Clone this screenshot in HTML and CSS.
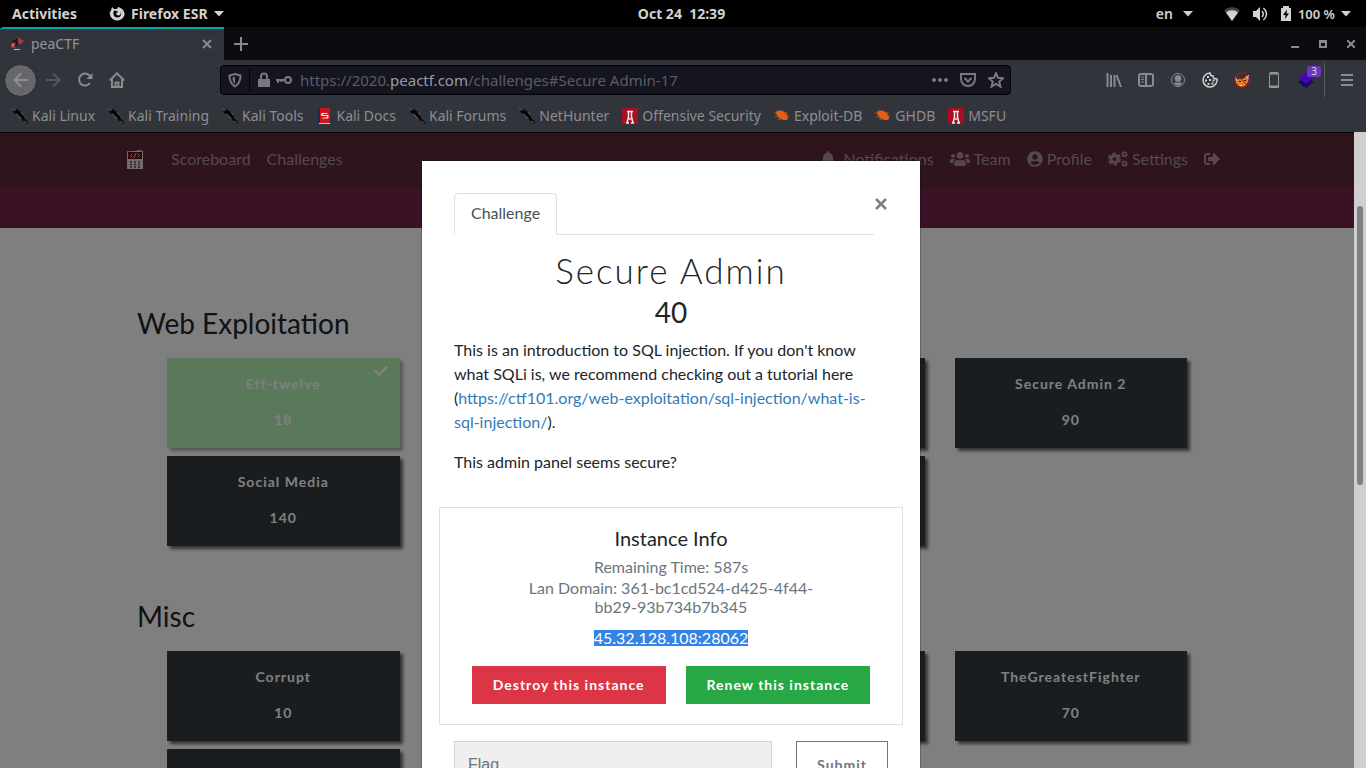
FILE: index.html
```html
<!DOCTYPE html>
<html lang="en">
<head>
<meta charset="utf-8">
<title>peaCTF</title>
<link rel="stylesheet" href="styles.css">
</head>
<body>
<svg class="defs" aria-hidden="true">
  <symbol id="dragon" viewBox="0 0 16 16"><path fill="#050506" d="M0 0l3 1.500 2-.500 2 2 2.500 1 1.500 3 1 3 4 4-.500 2-2-1-3-3-1-2-3-1.500L5 7 3 5.500 1 4l1-1z"/><path stroke="#85878b" stroke-width=".7" fill="none" d="M0 .500l4 2M4 6l2 1 1 2 2 1M9 4l2 3M12 13l3 2"/></symbol>
  <symbol id="docs" viewBox="0 0 16 16"><path fill="#1b2b58" d="M2 1h2v14H2z"/><path fill="#d0121b" d="M4 0h10v15H4z"/><path fill="#ccc" d="M3 15h11v1H3z"/><path d="M11.500 5.500H7L6 7.500h6L11 10H6.500M7.500 5L5 6.500M10.500 10.500l2-1.500" stroke="#ddd" stroke-width="1.200" fill="none"/></symbol>
  <symbol id="offsec" viewBox="0 0 16 16"><path fill="#a90e22" d="M0 0h16v16H0z"/><path d="M5 3.500h6M6.500 3v6L5 15m4.500-12v6L11 15M4 15h3M9 15h3M7 11h2" fill="none" stroke="#eee" stroke-width="1.500"/></symbol>
  <symbol id="bug" viewBox="0 0 16 16"><path fill="#e25f13" d="M2 4c2-2 6-2 8 0 3 1 4 4 4 7-2 2-5 1-7 0C4 10 2 7 2 4z"/><path stroke="#b5541b" stroke-width=".8" fill="none" d="M0 5h3M1 9h5m-2 3l3-1M10 5l4-1M12 8l3 0M5 4L3 2"/></symbol>
  <symbol id="caret" viewBox="0 0 10 6"><path fill="currentColor" d="M0 0h10L5 5.500z"/></symbol>
</svg>

<div class="desktop">
  <header class="topbar">
    <div class="top-left">
      <button class="top-btn">Activities</button>
      <button class="top-btn app">
        <svg width="16" height="16" viewBox="0 0 16 16"><path fill="currentColor" d="M3 1l2 2h3l1-2c4 1 7 4 6.500 8A7.500 7.500 0 1 1 1 5l.500 1z"/><path fill="#000" d="M5 4.500l3 .500 1 1.500-2 .500c0 2 2 3 4 2 1-1 1-2.500.500-4C13 8 12 11 9 11.500 5 12 3.500 8 5 4.500z"/></svg>
        Firefox ESR
        <svg width="10" height="6"><use href="#caret"/></svg>
      </button>
    </div>
    <button class="top-btn clock">Oct 24&nbsp; 12:39</button>
    <div class="top-right">
      <button class="top-btn lang">en <svg width="10" height="6"><use href="#caret"/></svg></button>
      <button class="top-btn status">
        <svg width="16" height="16" viewBox="0 0 16 16"><path fill="#444" d="M0 4.500C4 0 12 0 16 4.500L8 15z"/><path fill="currentColor" d="M2 6.500c3-3 9-3 12 0L8 15z"/></svg>
        <svg class="sound" width="16" height="16" viewBox="0 0 16 16"><path fill="currentColor" d="M1 5h3l4-4v14l-4-4H1z"/><path stroke="currentColor" stroke-width="1.500" fill="none" d="M10 5q2.500 3 0 6M11.500 2q6 6 0 12"/></svg>
        <svg class="battery" width="12" height="16" viewBox="0 0 12 16"><path fill="currentColor" d="M1 2h2V0h6v2h2v13H1z"/><path d="M7 3.500L3 9h2.500L5 13l4-5.500H6.500z"/></svg>
        100 %
        <svg width="10" height="6"><use href="#caret"/></svg>
      </button>
    </div>
  </header>

  <div class="tabstrip">
    <div class="tab">
      <svg width="16" height="16" viewBox="0 0 16 16"><path fill="#b53540" d="M7 1l7 4-5 4z"/><circle cx="3.500" cy="9.500" r="2.500" fill="#b53540"/><circle cx="3" cy="9" r="1" fill="#d99"/><path stroke="#15161a" stroke-width="1.500" fill="none" d="M7 2v6l-2 2M3 5h3"/><path stroke="#bbb" d="M4 13.500h6"/></svg>
      <span class="tab-title">peaCTF</span>
      <button class="icon-btn" aria-label="Close tab"><svg width="12" height="12" viewBox="0 0 12 12"><path class="line" d="M2 2l8 8M10 2l-8 8"/></svg></button>
    </div>
    <button class="icon-btn new-tab" aria-label="New tab"><svg width="16" height="16" viewBox="0 0 16 16"><path class="line" d="M8 1v14M1 8h14"/></svg></button>
    <div class="win-btns">
      <button class="icon-btn" aria-label="Minimize"><svg width="8" height="8" viewBox="0 0 8 8"><path fill="currentColor" d="M0 6h8v2H0z"/></svg></button>
      <button class="icon-btn" aria-label="Maximize"><svg width="8" height="8" viewBox="0 0 8 8"><path stroke="currentColor" stroke-width="2" fill="none" d="M1 2h6v5H1zM0 1h8"/></svg></button>
      <button class="icon-btn" aria-label="Close"><svg width="8" height="8" viewBox="0 0 8 8"><path stroke="currentColor" stroke-width="2" d="M0 0l8 8M8 0L0 8"/></svg></button>
    </div>
  </div>

  <div class="toolbar">
    <div class="nav-btns">
      <button class="back" aria-label="Back"><svg width="16" height="16" viewBox="0 0 16 16"><path class="line" d="M15 8H2M8 1.500L1.500 8 8 14.500"/></svg></button>
      <button class="icon-btn dim" aria-label="Forward"><svg width="16" height="16" viewBox="0 0 16 16"><path class="line" d="M1 8h13M8 1.500L14.500 8 8 14.500"/></svg></button>
      <button class="icon-btn" aria-label="Reload"><svg width="16" height="16" viewBox="0 0 16 16"><path class="line" d="M13 11a6 6 0 1 1-.500-7.500L14 5"/><path fill="currentColor" d="M15.500 1v6h-6z"/></svg></button>
      <button class="icon-btn" aria-label="Home"><svg width="16" height="16" viewBox="0 0 16 16"><path class="line" d="M.800 8.500L8 1.300l7.200 7.200M3 7v8h10V7M6.500 15v-4.500h3V15"/></svg></button>
    </div>
    <div class="urlbar">
      <svg width="14" height="16" viewBox="0 0 14 16"><path class="line" d="M7 2l5.500 1.500C12.500 9 11 12 7 14.500 3 12 1.500 9 1.500 3.500z"/><path fill="currentColor" d="M7 5v7C5 10.500 4.500 8 4.500 5.500z"/></svg>
      <span class="url-sep"></span>
      <svg width="12" height="16" viewBox="0 0 12 16"><path fill="currentColor" d="M0 7h12v8H0z"/><path stroke="currentColor" stroke-width="2" fill="none" d="M3 8V4.500a3 3 0 0 1 6 0V8"/></svg>
      <svg class="key" width="16" height="8" viewBox="0 0 16 8"><circle class="line" cx="12" cy="4" r="3"/><path class="line" d="M9 4H0M2 4v3M5.500 4v2"/></svg>
      <span class="url">https://2020.<b>peactf.com</b>/challenges#Secure Admin-17</span>
      <svg width="16" height="16" viewBox="0 0 16 16"><g fill="currentColor"><circle cx="2" cy="8" r="2"/><circle cx="8" cy="8" r="2"/><circle cx="14" cy="8" r="2"/></g></svg>
      <svg width="16" height="16" viewBox="0 0 16 16"><path class="line" d="M1 2h14v5a7 7 0 0 1-14 0zM4.500 6L8 9.500 11.500 6"/></svg>
      <svg width="16" height="16" viewBox="0 0 16 16"><path class="line" d="M8 1l2 4.800 5.200.400-4 3.300 1.300 5.200L8 12l-4.500 2.700L4.800 9.500l-4-3.300L6 5.800z"/></svg>
    </div>
    <div class="ext-btns">
      <button class="icon-btn" aria-label="Library"><svg width="16" height="16" viewBox="0 0 16 16"><path class="line" d="M1.500 1v14M5 3v12M8.500 3v12M10.500 3l4.500 12"/></svg></button>
      <button class="icon-btn" aria-label="Sidebars"><svg width="16" height="16" viewBox="0 0 16 16"><rect class="line" x="1" y="2" width="14" height="12" rx="2"/><path class="line" d="M8 2v12"/><path stroke="currentColor" d="M3 5h3M3 7.500h3M3 10h3"/></svg></button>
      <button class="icon-btn" aria-label="Account"><svg width="16" height="16" viewBox="0 0 16 16"><circle cx="8" cy="8" r="6.500" fill="none" stroke="currentColor"/><circle cx="8" cy="6.500" r="3.300" fill="currentColor"/><path fill="currentColor" d="M3.500 10.500h9l-2.500 3H6z"/></svg></button>
      <button class="icon-btn bright" aria-label="Cookies"><svg width="16" height="16" viewBox="0 0 16 16"><path fill="none" stroke="currentColor" stroke-width="1.500" d="M8 1c0 2 1 3 3 3 0 2 2 3 4 3a7 7 0 1 1-7-6z"/><path fill="currentColor" d="M5 4h2v2H5zM3 7.500h2v2H3zM7 7h2v2H7zM10.500 7.500h2v2h-2zM5.500 11h2v2h-2zM9.500 10.500h2v2h-2z"/></svg></button>
      <button class="icon-btn" aria-label="Proxy"><svg width="16" height="16" viewBox="0 0 16 16"><path fill="#d98220" d="M2 8l3-1 4 0 5-4v7l-4 5-5-1-3-3z"/><path fill="#ddd" d="M1 4l2 3-1 3zM12 4l3-1v5zM5 13l3 0-1 2z"/><path fill="#222" d="M5 9h2v1H5zM10 8h2v1h-2z"/><circle cx="8" cy="8" r="7.200" fill="none" stroke="#c40f12"/><path stroke="#c40f12" d="M3 3l10 10"/></svg></button>
      <button class="icon-btn" aria-label="Responsive mode"><svg width="16" height="16" viewBox="0 0 16 16"><rect x="3.500" y=".5" width="9" height="15" rx="1" fill="none" stroke="#99958f"/><path stroke="#99958f" stroke-width="2" d="M3 14.500h10M4 1.500h8"/></svg></button>
      <button class="icon-btn ext" aria-label="Wappalyzer"><svg width="16" height="16" viewBox="0 0 16 16"><path fill="#1c0568" d="M0 10l8-5 8 5-8 6z"/><path fill="#4608ad" d="M0 6l8-6 8 6-8 5.500z"/></svg><span class="count">3</span></button>
      <span class="ext-sep"></span>
      <button class="icon-btn" aria-label="Menu"><svg width="12" height="16" viewBox="0 0 12 16"><path class="line" d="M0 3h12M0 8h12M0 13h12"/></svg></button>
    </div>
  </div>

  <nav class="bookmarks" aria-label="Bookmarks">
    <a href="#"><svg width="16" height="16"><use href="#dragon"/></svg>Kali Linux</a>
    <a href="#"><svg width="16" height="16"><use href="#dragon"/></svg>Kali Training</a>
    <a href="#"><svg width="16" height="16"><use href="#dragon"/></svg>Kali Tools</a>
    <a href="#"><svg width="16" height="16"><use href="#docs"/></svg>Kali Docs</a>
    <a href="#"><svg width="16" height="16"><use href="#dragon"/></svg>Kali Forums</a>
    <a href="#"><svg width="16" height="16"><use href="#dragon"/></svg>NetHunter</a>
    <a href="#"><svg width="16" height="16"><use href="#offsec"/></svg>Offensive Security</a>
    <a href="#"><svg width="16" height="16"><use href="#bug"/></svg>Exploit-DB</a>
    <a href="#"><svg width="16" height="16"><use href="#bug"/></svg>GHDB</a>
    <a href="#"><svg width="16" height="16"><use href="#offsec"/></svg>MSFU</a>
  </nav>

  <div class="viewport">
    <div class="page">
      <nav class="navbar">
        <div class="navbar-inner">
          <a class="brand" href="#" aria-label="peaCTF"><svg width="16" height="20" viewBox="0 0 16 20"><path fill="#e0d8d6" d="M0 1l2 .5L4 1h4l4-1 4 1v18H0z"/><path fill="#5d0910" d="M1 2h14v7H1z"/><path stroke="#d5c8c8" fill="none" d="M5.500 3.500l-2 2 2 2M10.500 3.500l2 2-2 2M9 3l-2 5"/><path stroke="#7b3a40" stroke-width="1.500" stroke-dasharray="2 2" d="M3 12h11M3 14.500h11M3 17h11"/></svg></a>
          <a href="#">Scoreboard</a>
          <a href="#">Challenges</a>
          <div class="nav-right">
            <a class="bell" href="#"><svg width="14" height="16" viewBox="0 0 448 512"><path fill="currentColor" d="M224 512c35.320 0 63.970-28.650 63.970-64H160.030c0 35.350 28.650 64 63.970 64zm215.390-149.710c-19.320-20.760-55.470-51.990-55.470-154.290 0-77.700-54.480-139.900-127.940-155.160V32c0-17.670-14.320-32-31.980-32s-31.980 14.330-31.980 32v20.840C118.560 68.100 64.080 130.300 64.080 208c0 102.300-36.150 133.530-55.470 154.290-6 6.450-8.660 14.160-8.610 21.710.110 16.400 12.980 32 32.100 32h383.800c19.120 0 32-15.600 32.100-32 .050-7.550-2.610-15.270-8.610-21.710z"/></svg>Notifications</a>
            <a href="#"><svg width="20" height="16" viewBox="0 0 640 512"><path fill="currentColor" d="M96 224c35.300 0 64-28.700 64-64s-28.700-64-64-64-64 28.700-64 64 28.700 64 64 64zm448 0c35.300 0 64-28.700 64-64s-28.700-64-64-64-64 28.700-64 64 28.700 64 64 64zm32 32h-64c-17.600 0-33.500 7.100-45.100 18.600 40.300 22.100 68.900 62 75.100 109.400h66c17.700 0 32-14.300 32-32v-32c0-35.300-28.700-64-64-64zm-256 0c61.900 0 112-50.100 112-112S381.900 32 320 32 208 82.100 208 144s50.100 112 112 112zm76.800 32h-8.300c-20.800 10-43.900 16-68.500 16s-47.600-6-68.500-16h-8.300C179.600 288 128 339.600 128 403.200V432c0 26.500 21.500 48 48 48h288c26.500 0 48-21.500 48-48v-28.800c0-63.600-51.600-115.200-115.200-115.200zm-223.700-13.400C161.500 263.100 145.600 256 128 256H64c-35.300 0-64 28.700-64 64v32c0 17.700 14.300 32 32 32h65.900c6.300-47.400 34.900-87.300 75.200-109.400z"/></svg>Team</a>
            <a href="#"><svg width="16" height="16" viewBox="0 0 496 512"><path fill="currentColor" d="M248 8C111 8 0 119 0 256s111 248 248 248 248-111 248-248S385 8 248 8zm0 96c48.600 0 88 39.400 88 88s-39.400 88-88 88-88-39.400-88-88 39.400-88 88-88zm0 344c-58.700 0-111.300-26.600-146.500-68.200 18.800-35.400 55.600-59.800 98.500-59.800 2.400 0 4.800.4 7.100 1.100 13 4.200 26.600 6.900 40.900 6.900 14.300 0 28-2.700 40.900-6.900 2.300-.7 4.700-1.100 7.100-1.100 42.900 0 79.700 24.400 98.500 59.800C359.300 421.400 306.700 448 248 448z"/></svg>Profile</a>
            <a href="#"><svg width="20" height="16" viewBox="0 0 20 16"><g fill="none" stroke="currentColor"><circle cx="6.500" cy="8" r="3.500" stroke-width="3"/><circle cx="6.500" cy="8" r="5.700" stroke-width="1.800" stroke-dasharray="3.600 2.370"/><circle cx="16.500" cy="3.300" r="1.900" stroke-width="1.500"/><circle cx="16.500" cy="3.300" r="2.900" stroke-width="1" stroke-dasharray="1.500 1.500"/><circle cx="16.500" cy="12.700" r="1.900" stroke-width="1.500"/><circle cx="16.500" cy="12.700" r="2.900" stroke-width="1" stroke-dasharray="1.500 1.500"/></g></svg>Settings</a>
            <a href="#" aria-label="Logout"><svg width="16" height="16" viewBox="0 0 512 512"><path fill="currentColor" d="M497 273L329 441c-15 15-41 4.500-41-17v-96H152c-13.300 0-24-10.700-24-24v-96c0-13.300 10.700-24 24-24h136V88c0-21.400 25.900-32 41-17l168 168c9.300 9.400 9.300 24.600 0 34zM192 436v-40c0-6.600-5.400-12-12-12H96c-17.700 0-32-14.300-32-32V160c0-17.700 14.300-32 32-32h84c6.600 0 12-5.400 12-12V76c0-6.600-5.400-12-12-12H96c-53 0-96 43-96 96v192c0 53 43 96 96 96h84c6.600 0 12-5.400 12-12z"/></svg></a>
          </div>
        </div>
      </nav>
      <div class="jumbotron"></div>
      <main class="board">
        <section>
          <h3>Web Exploitation</h3>
          <div class="tiles">
            <button class="tile solved"><span>Eff-twelve</span><span>18</span><svg class="check" width="14" height="14" viewBox="0 0 512 512"><path fill="currentColor" d="M173.898 439.404l-166.400-166.400c-9.997-9.997-9.997-26.206 0-36.204l36.203-36.204c9.997-9.998 26.207-9.998 36.204 0L192 312.690 432.095 72.596c9.997-9.997 26.207-9.997 36.204 0l36.203 36.204c9.997 9.997 9.997 26.206 0 36.204l-294.400 294.401c-9.998 9.997-26.207 9.997-36.204-.001z"/></svg></button>
            <button class="tile"></button>
            <button class="tile"></button>
            <button class="tile"><span>Secure Admin 2</span><span>90</span></button>
            <button class="tile"><span>Social Media</span><span>140</span></button>
            <button class="tile"></button>
            <button class="tile"></button>
          </div>
        </section>
        <section>
          <h3>Misc</h3>
          <div class="tiles">
            <button class="tile"><span>Corrupt</span><span>10</span></button>
            <button class="tile"></button>
            <button class="tile"></button>
            <button class="tile"><span>TheGreatestFighter</span><span>70</span></button>
            <button class="tile"></button>
          </div>
        </section>
      </main>
    </div>

    <div class="backdrop">
      <div class="modal" role="dialog" aria-labelledby="challenge-name">
        <div class="modal-head">
          <div class="tabs"><button class="tab-link">Challenge</button></div>
          <button class="close" aria-label="Close"><svg width="14" height="12" viewBox="0 0 14 12"><path stroke="currentColor" stroke-width="2.600" d="M2 1l10 10M12 1L2 11"/></svg></button>
        </div>
        <h2 id="challenge-name">Secure Admin</h2>
        <h3 class="points">40</h3>
        <p>This is an introduction to SQL injection. If you don't know what SQLi is, we recommend checking out a tutorial here (<a href="#">https://ctf101.org/web-exploitation/sql-injection/what-is-sql-injection/</a>).</p>
        <p>This admin panel seems secure?</p>
        <div class="instance">
          <h5>Instance Info</h5>
          <div class="muted">Remaining Time: 587s</div>
          <div class="muted">Lan Domain: 361-bc1cd524-d425-4f44-bb29-93b734b7b345</div>
          <div class="address"><mark>45.32.128.108:28062</mark></div>
          <div class="actions">
            <button class="btn danger">Destroy this instance</button>
            <button class="btn success">Renew this instance</button>
          </div>
        </div>
        <form class="submit-row">
          <input type="text" placeholder="Flag" aria-label="Flag">
          <button type="button" class="btn outline">Submit</button>
        </form>
      </div>
    </div>
    <div class="scrollbar"><div class="thumb"></div></div>
  </div>
</div>
</body>
</html>
```

FILE: styles.css
```css
* { box-sizing: border-box; }
body { margin: 0; font-family: Lato, sans-serif; font-size: 16px; line-height: 24px; color: #212529; }
button, input { font: inherit; margin: 0; border-radius: 0; }
button { border: 0; padding: 0; background: none; color: inherit; }
svg { display: block; flex: none; }
a { text-decoration: none; color: inherit; }
h2, h3, h5, p { margin: 0; font-weight: 400; }
.defs { position: absolute; width: 0; height: 0; }
.line { fill: none; stroke: currentColor; stroke-width: 2; }

.desktop { display: flex; flex-direction: column; height: 100vh; overflow: hidden; }

/* desktop top bar */
.topbar { display: grid; grid-template-columns: 1fr auto 1fr; align-items: center; height: 27px; padding: 0 15px 0 12px; background: #000; color: #d2d2d0; font: 700 14px/20px "Noto Sans", sans-serif; }
.top-left, .top-right, .top-btn { display: flex; align-items: center; }
.top-left { gap: 32px; }
.top-btn { gap: 6px; }
.top-right { justify-content: flex-end; gap: 31px; font-weight: 600; }
.lang { gap: 10px; }
.status { font-size: 13px; }
.sound { margin-left: 6px; }
.battery { margin-left: 6px; }

/* browser chrome */
.tabstrip { display: flex; align-items: center; height: 33px; background: #0b0b10; color: #8f9496; font: 15px/20px "Noto Sans", sans-serif; }
.tab { display: flex; align-items: center; gap: 5px; width: 224px; height: 33px; padding: 0 11px 2px 10px; border-top: 2px solid #00a5a4; border-top-left-radius: 4px; background: #32343c; }
.tab-title { flex: 1; font-size: 14px; }
.new-tab { margin-left: 9px; }
.win-btns { display: flex; gap: 20px; margin-left: auto; padding-right: 11px; }
.icon-btn { display: flex; align-items: center; justify-content: center; color: #888a8d; }
.icon-btn.dim { color: #55575d; }
.icon-btn.bright { color: #cfd0d1; }

.toolbar { display: flex; align-items: center; height: 41px; padding: 0 13px 1px 4px; background: #32343c; }
.nav-btns { display: flex; align-items: center; gap: 16px; }
.back { display: flex; align-items: center; justify-content: center; width: 33px; height: 33px; border: 1px solid #26272c; border-radius: 50%; background: #66676c; color: #8d8e91; margin-right: -8px; }
.urlbar { display: flex; align-items: center; flex: 1; height: 30px; margin: 0 95px; padding: 0 6px 0 7px; border: 1px solid #020204; border-radius: 4px; background: #141520; color: #77797d; gap: 12px; }
.url-sep { width: 1px; height: 22px; margin-left: -5px; margin-right: -4px; background: #020204; }
.key { margin-left: -6px; margin-right: -4px; }
.url { flex: 1; color: #5c5d64; font: 15px/20px "Noto Sans", sans-serif; white-space: nowrap; }
.url b { font-weight: 400; color: #9a9b9f; }
.ext-btns { display: flex; align-items: center; gap: 16px; }
.ext { position: relative; }
.count { position: absolute; left: 9px; top: -6px; width: 14px; height: 11px; border-radius: 2px; background: #6a38b8; color: #ddd; font: 10px/11px "Noto Sans", sans-serif; }
.ext-sep { width: 1px; height: 34px; margin-left: -6px; background: #5a5c62; }

.bookmarks { display: flex; align-items: center; gap: 13px; height: 31px; padding: 0 12px; border-bottom: 1px solid #2b363b; background: #32343c; color: #8d8e91; font: 14px/20px "Noto Sans", sans-serif; white-space: nowrap; }
.bookmarks a { display: flex; align-items: center; gap: 4px; }

/* site */
.viewport { position: relative; flex: 1; min-height: 0; display: flex; overflow: hidden; }
.page { flex: 1; background: #fff; }
.scrollbar { position: relative; width: 12px; background: #cfcfcf; padding: 74px 3px 0; }
.thumb { height: 279px; border-radius: 3px; background: #7d8182; }
.navbar { height: 56px; background: #5a283a; border-top: 1px solid #000; color: #aa939a; }
.navbar-inner { display: flex; align-items: center; height: 52px; max-width: 1110px; margin: 0 auto; padding: 0 12px 0 5px; gap: 16px; }
.brand { margin-right: 12px; padding-top: 2px; }
.nav-right { display: flex; gap: 16px; margin-left: auto; }
.nav-right a { display: flex; align-items: center; gap: 4px; }
.nav-right .bell { gap: 8px; }
.jumbotron { height: 40px; background: #76224c; }
.board { max-width: 1140px; margin: 0 auto; padding: 78px 30px 0; }
.board section { margin-bottom: 45px; }
h3 { font-size: 28px; line-height: 34px; }
.tiles { display: grid; grid-template-columns: repeat(4, 1fr); column-gap: 30px; row-gap: 8px; padding: 18px 30px 8px; }
.tile { position: relative; display: flex; flex-direction: column; align-items: center; gap: 16px; height: 90px; padding: 16px 16px 18px; background: #343a40; color: #fff; box-shadow: 3px 3px 3px rgba(0, 0, 0, 0.6); font-size: 14px; font-weight: 700; line-height: 20px; letter-spacing: 1px; }
.solved { background: #b4f2b6; box-shadow: 3px 3px 3px rgba(0, 0, 0, 0.3); }
.check { position: absolute; right: 12px; top: 6px; }

.backdrop { position: absolute; inset: 0 12px 0 0; display: flex; justify-content: center; align-items: flex-start; padding: 28px 12px 0 0; background: rgba(0, 0, 0, 0.5); }
.modal { width: 500px; padding: 32px; border: 1px solid rgba(0, 0, 0, 0.2); background: #fff; background-clip: padding-box; }
.modal-head { display: flex; align-items: flex-start; justify-content: space-between; margin-bottom: 16px; }
.tabs { width: 420px; display: flex; border-bottom: 1px solid #dee2e6; }
.tab-link { height: 42px; padding: 0 16px 2px; margin-bottom: -1px; border: 1px solid #dee2e6; border-bottom-color: #fff; border-radius: 4px 4px 0 0; background: #fff; color: #495057; }
.close { margin-top: 5px; color: #808080; }
h2 { font-size: 35px; line-height: 38px; font-weight: 300; letter-spacing: 2px; text-align: center; }
.points { margin: 6px 0 9px; text-align: center; }
.modal p { margin-bottom: 16px; }
.modal p a { color: #337ab7; }
.instance { margin: 33px -15px 16px; padding: 18px 20px 20px; border: 1px solid #dfdfdf; text-align: center; }
h5 { margin-bottom: 7px; font-size: 20px; line-height: 24px; }
.muted { max-width: 300px; margin: 0 auto 2px; color: #6c757d; line-height: 19px; }
.address { margin-top: 14px; line-height: 16px; }
mark { display: inline-block; line-height: 16px; background: #3584e4; color: #fff; }
.actions { display: flex; justify-content: center; gap: 20px; margin-top: 20px; }
.btn { height: 38px; padding: 0 21px; color: #fff; font-size: 14px; font-weight: 700; letter-spacing: 1px; }
.danger { background: #dc3545; }
.success { background: #28a745; }
.submit-row { display: flex; gap: 24px; }
.submit-row input { flex: 1; min-width: 0; height: 48px; padding: 0 13px; border: 1px solid #ced4da; background: #efefef; font-family: "Liberation Sans", sans-serif; }
.submit-row input::placeholder { color: #6c757d; opacity: 1; }
.btn.outline { height: 48px; padding: 0 20px; border: 1px solid #6c757d; color: #6c757d; background: #fff; }
```
